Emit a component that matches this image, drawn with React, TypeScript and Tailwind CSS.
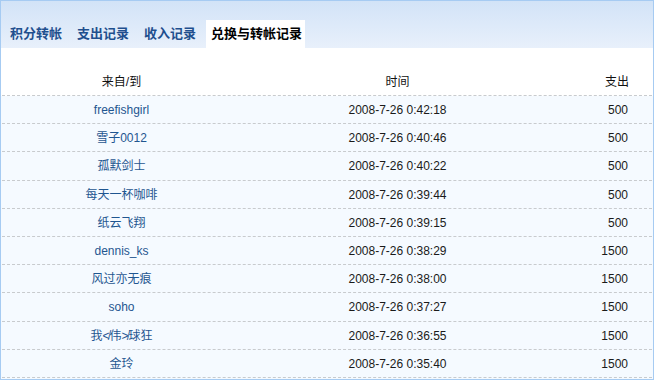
import React from "react";

const rows: [string, string, string][] = [
  ["freefishgirl", "2008-7-26 0:42:18", "500"],
  ["雪子0012", "2008-7-26 0:40:46", "500"],
  ["孤默剑士", "2008-7-26 0:40:22", "500"],
  ["每天一杯咖啡", "2008-7-26 0:39:44", "500"],
  ["纸云飞翔", "2008-7-26 0:39:15", "500"],
  ["dennis_ks", "2008-7-26 0:38:29", "1500"],
  ["风过亦无痕", "2008-7-26 0:38:00", "1500"],
  ["soho", "2008-7-26 0:37:27", "1500"],
  ["我≮伟≯球狂", "2008-7-26 0:36:55", "1500"],
  ["金玲", "2008-7-26 0:35:40", "1500"],
];

const tabs = ["积分转帐", "支出记录", "收入记录"];

export default function App() {
  return (
    <div className="w-[654px] h-[380px] overflow-hidden border border-[#a6cbf2] bg-white text-[12px] font-['Liberation_Sans','Noto_Sans_CJK_SC',sans-serif] text-[#111]">
      <div className="h-[47px] bg-gradient-to-b from-[#d2e3f7] to-[#e8f0fb] flex items-end pl-[4px] gap-[5px]">
        {tabs.map((t) => (
          <div
            key={t}
            className="h-[28px] px-[5px] flex items-center text-[13px] font-bold text-[#1f4f8e]"
          >
            {t}
          </div>
        ))}
        <div className="h-[28px] pl-[5px] pr-[3px] flex items-center text-[13px] font-bold text-black bg-white">
          兑换与转帐记录
        </div>
      </div>
      <div className="pt-[20px]">
        <div className="grid grid-cols-[239px_313px_1fr] h-[28px] pt-[1px] items-center border-b border-dashed border-[#c8cbce] mx-[1px]">
          <div className="text-center">来自/到</div>
          <div className="text-center">时间</div>
          <div className="text-right pr-[23px]">支出</div>
        </div>
        <div className="bg-[#f5faff] h-[300px]">
          {rows.map(([from, time, amt], i) => (
            <div
              key={i}
              className="grid grid-cols-[239px_313px_1fr] h-[28.2px] pt-[1px] items-center border-b border-dashed border-[#c8cbce] mx-[1px]"
            >
              <div className="text-center text-[#1f5690]">{from}</div>
              <div className="text-center text-[#1a1a1a]">{time}</div>
              <div className="text-right pr-[24px] text-[#1a1a1a]">{amt}</div>
            </div>
          ))}
        </div>
      </div>
    </div>
  );
}
